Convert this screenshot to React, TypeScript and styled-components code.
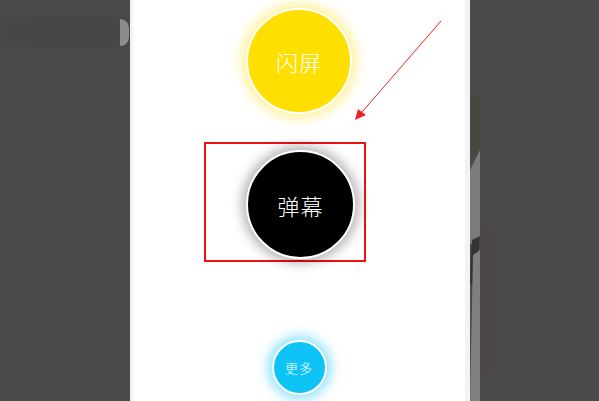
import styled, { createGlobalStyle } from 'styled-components';

const GlobalStyle = createGlobalStyle`
  html, body {
    margin: 0;
    padding: 0;
    background: #4a4a4a;
    font-family: "Noto Sans CJK SC", "Noto Sans", sans-serif;
  }
`;

const Stage = styled.div`
  position: relative;
  display: flex;
  width: 599px;
  height: 401px;
  overflow: hidden;
  background: #4a4a4a;
`;

const LeftSide = styled.div`
  width: 130px;
  flex-shrink: 0;
  padding-top: 17px;
`;

const TopBand = styled.div`
  display: flex;
  align-items: center;
  justify-content: flex-end;
  height: 30px;
  padding-right: 1px;
  background: linear-gradient(90deg, #474747 0%, #454545 60%, #474747 100%);
`;

const HalfDot = styled.span`
  width: 9px;
  height: 27px;
  border-radius: 0 14px 14px 0 / 0 50% 50% 0;
  background: #8c8c8c;
`;

const Panel = styled.div`
  width: 332px;
  flex-shrink: 0;
  display: flex;
  flex-direction: column;
  align-items: center;
  background: #ffffff;
  border-left: 3px solid #f3f3f3;
  border-right: 5px solid #f3f3f3;
  padding-top: 8px;
`;

const Circle = styled.div<{ $size: number; $bg: string; $glow: string; $font: number }>`
  width: ${(p) => p.$size}px;
  height: ${(p) => p.$size}px;
  box-sizing: border-box;
  flex-shrink: 0;
  border-radius: 50%;
  border: 2px solid #ffffff;
  background: ${(p) => p.$bg};
  box-shadow: 0 0 12px 4px ${(p) => p.$glow};
  display: flex;
  align-items: center;
  justify-content: center;
  color: #ffffff;
  font-size: ${(p) => p.$font}px;
  font-weight: 300;
  letter-spacing: 1px;
`;

const MarkBox = styled.div`
  align-self: flex-start;
  margin: 28px 0 0 71px;
  width: 162px;
  height: 120px;
  box-sizing: border-box;
  border: 2px solid #f01010;
  padding: 6px 0 0 40px;
`;

const Spacer = styled.div`
  height: 78px;
  flex-shrink: 0;
`;

const RightSide = styled.div`
  flex: 1;
`;

const Arrow = styled.svg`
  position: absolute;
  left: 0;
  top: 0;
  pointer-events: none;
`;

export default function App() {
  return (
    <>
      <GlobalStyle />
      <Stage>
        <LeftSide>
          <TopBand>
            <HalfDot />
          </TopBand>
        </LeftSide>
        <Panel>
          <Circle $size={106} $bg="#ffdf00" $glow="rgba(255,225,40,0.5)" $font={22}>
            闪屏
          </Circle>
          <MarkBox>
            <Circle $size={109} $bg="#000000" $glow="rgba(0,0,0,0.3)" $font={22}>
              弹幕
            </Circle>
          </MarkBox>
          <Spacer />
          <Circle $size={55} $bg="#0ec4f7" $glow="rgba(14,196,247,0.5)" $font={13}>
            更多
          </Circle>
        </Panel>
        <RightSide>
          <svg width="129" height="401" viewBox="0 0 129 401">
            <rect x="0" y="95" width="10" height="60" fill="#45432f" opacity="0.5" />
            <polygon points="10,150 0,170 0,245 10,238" fill="#7b7b7b" />
            <rect x="10" y="225" width="15" height="150" fill="#4b4747" />
            <polygon points="2,240 10,236 5,288 0,282" fill="#333333" />
            <polygon points="3,255 10,250 10,401 0,401" fill="#7f7f7f" />
          </svg>
        </RightSide>
        <Arrow width="599" height="401" viewBox="0 0 599 401">
          <line x1="441" y1="21" x2="362" y2="112" stroke="#f02020" strokeWidth="1" />
          <polygon points="355,120 358,109 366,115" fill="#f02020" />
        </Arrow>
      </Stage>
    </>
  );
}
